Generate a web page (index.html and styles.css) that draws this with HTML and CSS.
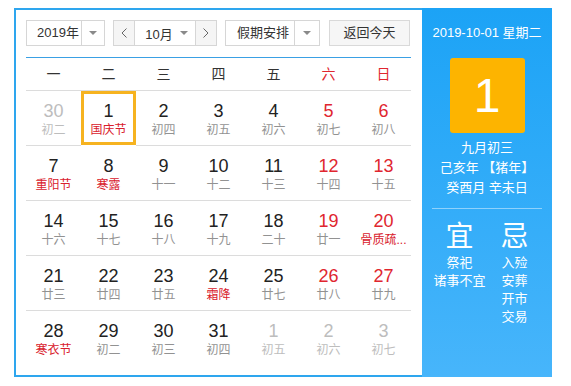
FILE: index.html
```html
<!DOCTYPE html>
<html lang="zh-CN">
<head>
<meta charset="utf-8">
<title>万年历</title>
<link rel="stylesheet" href="styles.css">
</head>
<body>
<div class="calendar">
  <div class="main">
    <div class="toolbar">
      <div class="select year-select">
        <span class="select-text">2019年</span>
        <span class="select-arrow"><i class="tri"></i></span>
      </div>
      <div class="select month-select">
        <span class="nav-btn"><svg width="6" height="10" viewBox="0 0 6 10"><polyline points="5.5,0.5 1,5 5.5,9.5" fill="none" stroke="#666" stroke-width="1"/></svg></span>
        <span class="month-text">10月<i class="tri"></i></span>
        <span class="nav-btn nav-right"><svg width="6" height="10" viewBox="0 0 6 10"><polyline points="0.5,0.5 5,5 0.5,9.5" fill="none" stroke="#666" stroke-width="1"/></svg></span>
      </div>
      <div class="select holiday-select">
        <span class="select-text center">假期安排</span>
        <span class="select-arrow wide"><i class="tri"></i></span>
      </div>
      <div class="today-btn">返回今天</div>
    </div>
    <div class="rule"></div>
    <div class="weekdays">
      <span>一</span><span>二</span><span>三</span><span>四</span><span>五</span><span class="red">六</span><span class="red">日</span>
    </div>
    <div class="days">
      <div class="day other"><b>30</b><small>初二</small></div>
      <div class="day selected fest"><b>1</b><small>国庆节</small></div>
      <div class="day"><b>2</b><small>初四</small></div>
      <div class="day"><b>3</b><small>初五</small></div>
      <div class="day"><b>4</b><small>初六</small></div>
      <div class="day wk"><b>5</b><small>初七</small></div>
      <div class="day wk"><b>6</b><small>初八</small></div>

      <div class="day fest"><b>7</b><small>重阳节</small></div>
      <div class="day fest"><b>8</b><small>寒露</small></div>
      <div class="day"><b>9</b><small>十一</small></div>
      <div class="day"><b>10</b><small>十二</small></div>
      <div class="day"><b>11</b><small>十三</small></div>
      <div class="day wk"><b>12</b><small>十四</small></div>
      <div class="day wk"><b>13</b><small>十五</small></div>

      <div class="day"><b>14</b><small>十六</small></div>
      <div class="day"><b>15</b><small>十七</small></div>
      <div class="day"><b>16</b><small>十八</small></div>
      <div class="day"><b>17</b><small>十九</small></div>
      <div class="day"><b>18</b><small>二十</small></div>
      <div class="day wk"><b>19</b><small>廿一</small></div>
      <div class="day wk fest"><b>20</b><small>骨质疏...</small></div>

      <div class="day"><b>21</b><small>廿三</small></div>
      <div class="day"><b>22</b><small>廿四</small></div>
      <div class="day"><b>23</b><small>廿五</small></div>
      <div class="day fest"><b>24</b><small>霜降</small></div>
      <div class="day"><b>25</b><small>廿七</small></div>
      <div class="day wk"><b>26</b><small>廿八</small></div>
      <div class="day wk"><b>27</b><small>廿九</small></div>

      <div class="day fest"><b>28</b><small>寒衣节</small></div>
      <div class="day"><b>29</b><small>初二</small></div>
      <div class="day"><b>30</b><small>初三</small></div>
      <div class="day"><b>31</b><small>初四</small></div>
      <div class="day other"><b>1</b><small>初五</small></div>
      <div class="day other"><b>2</b><small>初六</small></div>
      <div class="day other"><b>3</b><small>初七</small></div>
    </div>
  </div>
  <div class="side">
    <div class="side-date">2019-10-01 星期二</div>
    <div class="big-day">1</div>
    <div class="lunar">
      <div>九月初三</div>
      <div>己亥年 【猪年】</div>
      <div>癸酉月 辛未日</div>
    </div>
    <div class="side-rule"></div>
    <div class="yiji">
      <div class="yiji-col">
        <div class="yiji-title">宜</div>
        <div class="yiji-item">祭祀</div>
        <div class="yiji-item">诸事不宜</div>
      </div>
      <div class="yiji-col">
        <div class="yiji-title">忌</div>
        <div class="yiji-item">入殓</div>
        <div class="yiji-item">安葬</div>
        <div class="yiji-item">开市</div>
        <div class="yiji-item">交易</div>
      </div>
    </div>
  </div>
</div>
</body>
</html>
```

FILE: styles.css
```css
* { box-sizing: border-box; }
html, body { margin: 0; padding: 0; background: #fff; }
body {
  font-family: "Liberation Sans", Arial, "Noto Sans CJK SC", sans-serif;
  color: #333;
}
.calendar {
  display: flex;
  width: 538px;
  height: 369px;
  margin: 8px 0 0 14px;
}
.main {
  width: 408px;
  height: 369px;
  border: 2px solid #2ea6ee;
  border-right: none;
  padding: 10px 0 0 10px;
}
.toolbar {
  display: flex;
  height: 26px;
  gap: 8px;
  font-size: 13px;
}
.select {
  display: flex;
  height: 26px;
  border: 1px solid #d6d6d6;
  background: #fff;
}
.year-select { width: 79px; }
.month-select { width: 104px; }
.holiday-select { width: 95px; }
.select-text {
  flex: 1;
  line-height: 24px;
  padding-left: 10px;
}
.select-text.center { padding-left: 11px; }
.select-arrow {
  width: 23px;
  border-left: 1px solid #d6d6d6;
  display: flex;
  align-items: center;
  justify-content: center;
}
.select-arrow.wide { width: 25px; }
.tri {
  display: inline-block;
  width: 0;
  height: 0;
  border-left: 4px solid transparent;
  border-right: 4px solid transparent;
  border-top: 4px solid #8a8a8a;
}
.nav-btn {
  width: 21px;
  background: #f5f5f5;
  border-right: 1px solid #d6d6d6;
  display: flex;
  align-items: center;
  justify-content: center;
}
.nav-btn.nav-right {
  border-right: none;
  border-left: 1px solid #d6d6d6;
}
.month-text {
  flex: 1;
  display: flex;
  align-items: center;
  justify-content: center;
  gap: 7px;
  padding-left: 3px;
}
.today-btn {
  width: 81px;
  height: 26px;
  margin-left: 1px;
  border: 1px solid #d9d9d9;
  background: #f6f6f6;
  text-align: center;
  line-height: 24px;
}
.rule {
  width: 385px;
  height: 1px;
  margin-top: 11px;
  background: #3aa0e4;
}
.weekdays {
  display: grid;
  grid-template-columns: repeat(7, 55px);
  width: 385px;
  height: 33px;
  border-bottom: 1px solid #dcdcdc;
  font-size: 14px;
  line-height: 32px;
  text-align: center;
  color: #333;
}
.red { color: #e0262f; }
.days {
  display: grid;
  grid-template-columns: repeat(7, 55px);
  width: 385px;
}
.day {
  height: 55px;
  border-bottom: 1px solid #dcdcdc;
  text-align: center;
  padding-top: 9px;
}
.day:nth-last-child(-n+7) { border-bottom: none; }
.day b {
  display: block;
  font-weight: normal;
  font-size: 18px;
  line-height: 22px;
  color: #222;
}
.day small {
  display: block;
  font-size: 12px;
  line-height: 16px;
  color: #929292;
  white-space: nowrap;
}
.day.wk b { color: #e0262f; }
.day.fest small { color: #d9202c; }
.day.other b, .day.other small { color: #bdbdbd; }
.day.selected {
  outline: 3px solid #f6b320;
  outline-offset: -3px;
  height: 54px;
}
.side {
  width: 130px;
  height: 369px;
  background: linear-gradient(#1ca3f6, #47b5fb);
  color: #fff;
  display: flex;
  flex-direction: column;
  align-items: center;
}
.side-date {
  margin-top: 15px;
  font-size: 13px;
  line-height: 20px;
}
.big-day {
  margin-top: 15px;
  width: 75px;
  height: 75px;
  border-radius: 3px;
  background: #fdb400;
  font-size: 48px;
  line-height: 75px;
  text-align: center;
  color: #fff;
}
.lunar {
  margin-top: 5px;
  font-size: 13px;
  line-height: 20px;
  text-align: center;
}
.side-rule {
  margin-top: 10px;
  width: 110px;
  height: 1px;
  background: rgba(255, 255, 255, 0.45);
}
.yiji {
  display: flex;
  width: 110px;
  margin-top: 12px;
}
.yiji-col {
  width: 55px;
  text-align: center;
}
.yiji-title {
  font-size: 28px;
  line-height: 32px;
  margin-bottom: 1px;
}
.yiji-item {
  font-size: 13px;
  line-height: 18px;
  white-space: nowrap;
}
```
